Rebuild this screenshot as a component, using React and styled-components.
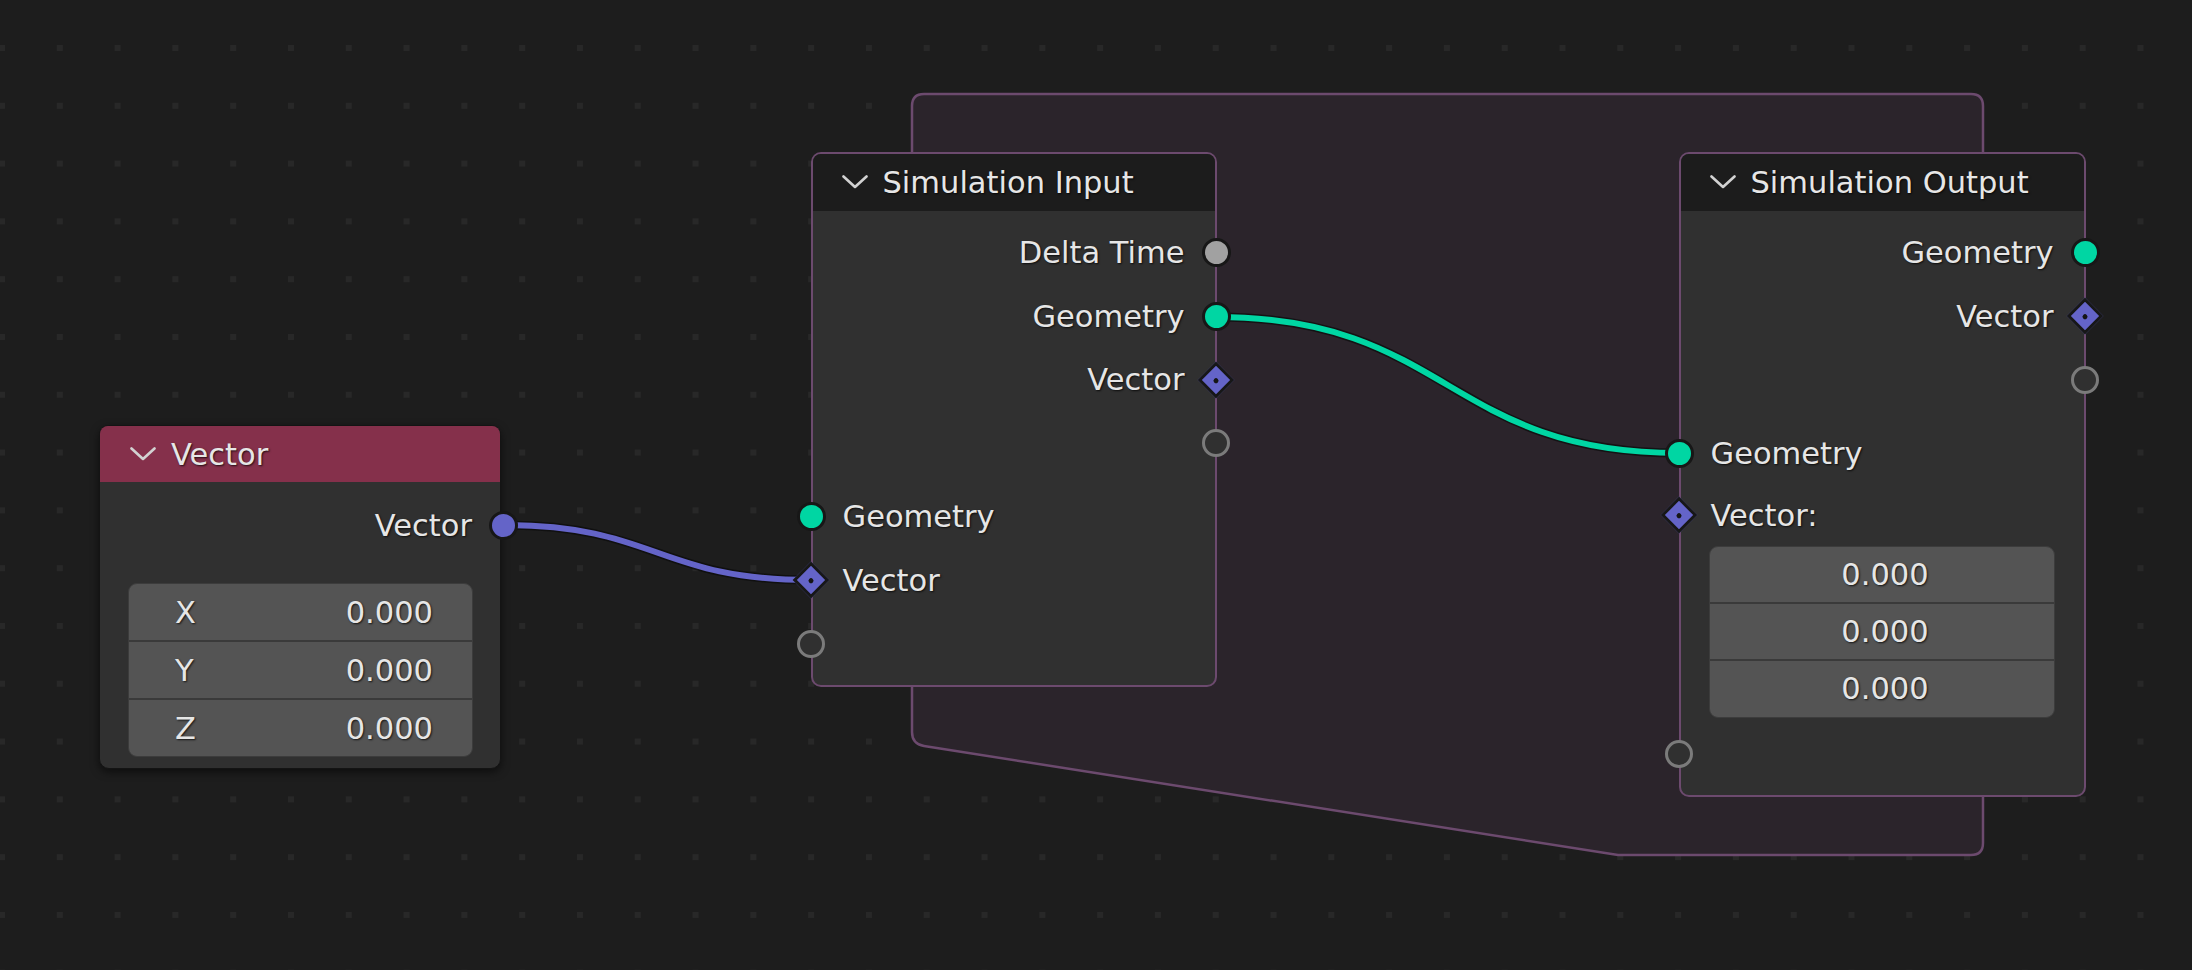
import React from "react";
import styled, { createGlobalStyle } from "styled-components";

const GlobalStyle = createGlobalStyle`
  html, body {
    margin: 0;
    padding: 0;
    background: #1d1d1d;
  }
  body {
    font-family: "DejaVu Sans", "Liberation Sans", sans-serif;
  }
`;

// node editor canvas with the dot grid
const Canvas = styled.div`
  position: relative;
  width: 2192px;
  height: 970px;
  overflow: hidden;
  background-color: #1d1d1d;
  background-image: conic-gradient(at 6px 6px, transparent 75%, #282828 0);
  background-size: 57.8px 57.8px;
  background-position: -1px 45px;
`;

const Wires = styled.svg`
  position: absolute;
  left: 0;
  top: 0;
  width: 2192px;
  height: 970px;
`;

const Node = styled.div`
  position: absolute;
  left: ${(p) => p.$x}px;
  top: ${(p) => p.$y}px;
  width: ${(p) => p.$w}px;
  box-sizing: border-box;
  background: #303030;
  border: ${(p) => (p.$zone ? "2.5px solid #6c4a6e" : "1px solid #141414")};
  border-radius: 10px;
  box-shadow: ${(p) =>
    p.$zone ? "none" : "0 3px 9px rgba(0, 0, 0, 0.55)"};
  color: #e6e6e6;
  font-size: 30.5px;
  text-shadow: 1px 1px 2px rgba(0, 0, 0, 0.75);
`;

const Header = styled.div`
  display: flex;
  align-items: center;
  gap: 15px;
  height: ${(p) => p.$h}px;
  padding-left: ${(p) => p.$pad}px;
  background: ${(p) => p.$color};
  border-radius: 8px 8px 0 0;
  white-space: nowrap;
`;

const Body = styled.div`
  display: flex;
  flex-direction: column;
  padding: ${(p) => p.$top}px 0 ${(p) => p.$bottom}px;
`;

const Gap = styled.div`
  height: ${(p) => p.$h}px;
  flex-shrink: 0;
`;

const Row = styled.div`
  position: relative;
  display: flex;
  align-items: center;
  justify-content: ${(p) => (p.$out ? "flex-end" : "flex-start")};
  height: ${(p) => p.$h || 63.5}px;
  padding: 0 ${(p) => p.$pad || 30}px;
  white-space: nowrap;
`;

// zero-size anchor on the node edge, the socket shape centres on it
const Pin = styled.span`
  position: absolute;
  top: 50%;
  ${(p) => p.$side}: ${(p) => -p.$off}px;
  width: 0;
  height: 0;
  display: flex;
  align-items: center;
  justify-content: center;
`;

const Dot = styled.span`
  flex-shrink: 0;
  box-sizing: border-box;
  width: 29px;
  height: 29px;
  border-radius: 50%;
  background: ${(p) => p.$color};
  border: 3px solid #171717;
`;

const Ring = styled.span`
  flex-shrink: 0;
  box-sizing: border-box;
  width: 28px;
  height: 28px;
  border-radius: 50%;
  background: #303030;
  border: 3px solid #7b7b7b;
`;

const Diamond = styled.span`
  flex-shrink: 0;
  box-sizing: border-box;
  width: 26px;
  height: 26px;
  transform: rotate(45deg);
  background: #6464c8;
  border: 3px solid #171717;
  display: flex;
  align-items: center;
  justify-content: center;

  &::after {
    content: "";
    width: 5px;
    height: 5px;
    border-radius: 50%;
    background: #151515;
  }
`;

const FieldBox = styled.div`
  display: flex;
  flex-direction: column;
  height: ${(p) => p.$h}px;
  margin: 0 ${(p) => p.$mr}px 0 ${(p) => p.$ml}px;
  box-sizing: border-box;
  background: #545454;
  border: 1px solid #3c3c3c;
  border-radius: 9px;
  overflow: hidden;
`;

const Field = styled.div`
  flex: 1;
  display: flex;
  align-items: center;
  justify-content: ${(p) => (p.$center ? "center" : "space-between")};
  padding: 0 39px 0 46px;

  & + & {
    border-top: 2px solid #3a3a3a;
  }
`;

const Chevron = () => (
  <svg width="26" height="14" viewBox="0 0 26 14" style={{ flexShrink: 0 }}>
    <polyline
      points="1.5,1.5 13,12 24.5,1.5"
      fill="none"
      stroke="#d2d2d2"
      strokeWidth="2.6"
      strokeLinecap="round"
      strokeLinejoin="round"
    />
  </svg>
);

const Socket = ({ side, off, kind, color }) => (
  <Pin $side={side} $off={off}>
    {kind === "dot" && <Dot $color={color} />}
    {kind === "ring" && <Ring />}
    {kind === "diamond" && <Diamond />}
  </Pin>
);

const GREEN = "#00d6a3";
const PURPLE = "#6464c8";
const GREY = "#a1a1a1";

const link = (x1, y1, x2, y2) => {
  const h = (x2 - x1) * 0.5;
  return `M${x1} ${y1} C${x1 + h} ${y1}, ${x2 - h} ${y2}, ${x2} ${y2}`;
};

const Wire = ({ d, color }) => (
  <g>
    <path d={d} fill="none" stroke="rgba(12,12,12,0.7)" strokeWidth="9" />
    <path d={d} fill="none" stroke={color} strokeWidth="6" />
  </g>
);

const App = () => {
  return (
    <Canvas>
      <GlobalStyle />
      <Wires viewBox="0 0 2192 970">
        {/* simulation zone hull */}
        <path
          d="M912 106 Q912 94 924 94 L1971 94 Q1983 94 1983 106 L1983 843 Q1983 855 1971 855 L1618 855 L924 746 Q912 744 912 732 Z"
          fill="#2b242b"
          stroke="#6c4a6e"
          strokeWidth="2.5"
        />
        <Wire d={link(503, 525, 811, 580)} color={PURPLE} />
        <Wire d={link(1216, 317, 1679, 453)} color={GREEN} />
      </Wires>

      <Node $x={99} $y={425} $w={402}>
        <Header $h={56} $pad={30} $color="#85304b">
          <Chevron />
          <span>Vector</span>
        </Header>
        <Body $top={11.25} $bottom={11}>
          <Row $out $pad={28}>
            Vector
            <Socket side="right" off={3} kind="dot" color={PURPLE} />
          </Row>
          <Gap $h={26.25} />
          <FieldBox $h={174} $ml={28} $mr={27}>
            <Field>
              <span>X</span>
              <span>0.000</span>
            </Field>
            <Field>
              <span>Y</span>
              <span>0.000</span>
            </Field>
            <Field>
              <span>Z</span>
              <span>0.000</span>
            </Field>
          </FieldBox>
        </Body>
      </Node>

      <Node $x={810.5} $y={151.5} $w={406} $zone>
        <Header $h={57} $pad={29} $color="#1c1c1c">
          <Chevron />
          <span>Simulation Input</span>
        </Header>
        <Body $top={10.25} $bottom={9.25}>
          <Row $out>
            Delta Time
            <Socket side="right" off={1.5} kind="dot" color={GREY} />
          </Row>
          <Row $out>
            Geometry
            <Socket side="right" off={1.5} kind="dot" color={GREEN} />
          </Row>
          <Row $out>
            Vector
            <Socket side="right" off={1.5} kind="diamond" />
          </Row>
          <Row $out>
            <Socket side="right" off={1.5} kind="ring" />
          </Row>
          <Gap $h={10} />
          <Row>
            <Socket side="left" off={1.5} kind="dot" color={GREEN} />
            Geometry
          </Row>
          <Row>
            <Socket side="left" off={1.5} kind="diamond" />
            Vector
          </Row>
          <Row>
            <Socket side="left" off={1.5} kind="ring" />
          </Row>
        </Body>
      </Node>

      <Node $x={1678.5} $y={151.5} $w={407} $zone>
        <Header $h={57} $pad={29} $color="#1c1c1c">
          <Chevron />
          <span>Simulation Output</span>
        </Header>
        <Body $top={10.25} $bottom={9.25}>
          <Row $out>
            Geometry
            <Socket side="right" off={1.5} kind="dot" color={GREEN} />
          </Row>
          <Row $out>
            Vector
            <Socket side="right" off={1.5} kind="diamond" />
          </Row>
          <Row $out>
            <Socket side="right" off={1.5} kind="ring" />
          </Row>
          <Gap $h={10} />
          <Row>
            <Socket side="left" off={1.5} kind="dot" color={GREEN} />
            Geometry
          </Row>
          <Row $h={60.75}>
            <Socket side="left" off={1.5} kind="diamond" />
            Vector:
          </Row>
          <FieldBox $h={172} $ml={28} $mr={29}>
            <Field $center>0.000</Field>
            <Field $center>0.000</Field>
            <Field $center>0.000</Field>
          </FieldBox>
          <Gap $h={4.25} />
          <Row>
            <Socket side="left" off={1.5} kind="ring" />
          </Row>
        </Body>
      </Node>
    </Canvas>
  );
};

export default App;
